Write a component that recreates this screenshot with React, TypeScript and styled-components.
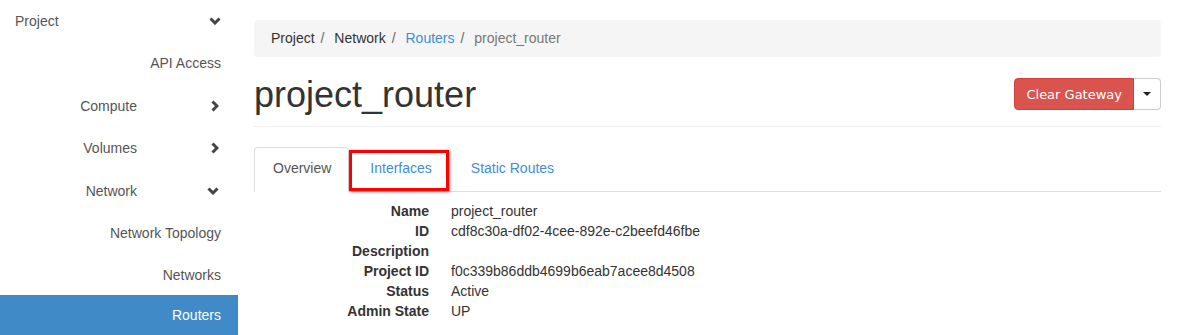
import React from "react";
import styled, { createGlobalStyle } from "styled-components";

const Global = createGlobalStyle`
  html, body { margin: 0; padding: 0; background: #fff; }
  body {
    font-family: "Liberation Sans", Helvetica, Arial, sans-serif;
    font-size: 14px;
    color: #333;
    line-height: 20px;
  }
  * { box-sizing: border-box; }
`;

const Page = styled.div`
  display: flex;
  width: 1177px;
  height: 335px;
  overflow: hidden;
`;

const Sidebar = styled.nav`
  width: 238px;
  flex: none;
  display: flex;
  flex-direction: column;
`;

const NavRow = styled.div<{ $h: number; $active?: boolean; $spread?: boolean }>`
  height: ${(p) => p.$h}px;
  display: flex;
  align-items: center;
  justify-content: ${(p) => (p.$spread ? "space-between" : "flex-end")};
  padding: 0 17px 0 15px;
  color: ${(p) => (p.$active ? "#fff" : "#555")};
  background: ${(p) => (p.$active ? "#408ac8" : "transparent")};
`;

const ChevronBox = styled.span`
  width: 84px;
  display: flex;
  justify-content: flex-end;
  padding-right: 2px;
`;

const Main = styled.main`
  flex: 1;
  min-width: 0;
  padding: 20px 16px 0 16px;
`;

const Breadcrumb = styled.ol`
  list-style: none;
  margin: 0;
  height: 37px;
  padding: 0 17px 2px;
  background: #f5f5f5;
  border-radius: 4px;
  display: flex;
  align-items: center;
`;

const Crumb = styled.li<{ $kind?: "link" | "current" }>`
  color: ${(p) => (p.$kind === "link" ? "#3f8fd2" : p.$kind === "current" ? "#777" : "#333")};
`;

const Sep = styled.span`
  color: #666;
  padding: 0 6px 0 6px;
`;

const Header = styled.div`
  margin-top: 18px;
  display: flex;
  align-items: center;
  justify-content: space-between;
  padding-bottom: 11px;
  border-bottom: 1px solid #eee;
`;

const Title = styled.h1`
  margin: 0;
  font-size: 36px;
  line-height: 40px;
  font-weight: 400;
  color: #333;
`;

const BtnGroup = styled.div`
  display: flex;
  height: 32px;
  margin-bottom: 2px;
`;

const DangerBtn = styled.button`
  font-family: "DejaVu Sans", sans-serif;
  font-size: 13px;
  height: 32px;
  padding: 0 11px;
  border: 1px solid #d43f3a;
  background: #d9534f;
  color: #fff;
  border-radius: 4px 0 0 4px;
`;

const CaretBtn = styled.button`
  width: 27px;
  height: 32px;
  border: 1px solid #ccc;
  border-left: none;
  background: #fff;
  border-radius: 0 4px 4px 0;
  display: flex;
  align-items: center;
  justify-content: center;
  padding: 0;
`;

const Caret = styled.span`
  width: 0;
  height: 0;
  border-left: 4px solid transparent;
  border-right: 4px solid transparent;
  border-top: 4px solid #222;
`;

const Tabs = styled.ul`
  list-style: none;
  margin: 20px 0 0;
  padding: 0;
  display: flex;
  border-bottom: 1px solid #ddd;
`;

const Tab = styled.li<{ $active?: boolean }>`
  position: relative;
  margin-right: 2px;
  margin-bottom: ${(p) => (p.$active ? "-1px" : "0")};
  padding: 10px 17px ${(p) => (p.$active ? "13px" : "12px")} 18px;
  border: 1px solid ${(p) => (p.$active ? "#ddd" : "transparent")};
  border-bottom: ${(p) => (p.$active ? "1px solid #fff" : "none")};
  border-radius: 4px 4px 0 0;
  background: ${(p) => (p.$active ? "#fff" : "transparent")};
  color: ${(p) => (p.$active ? "#555" : "#3f8fd2")};
`;

const Highlight = styled.span`
  position: absolute;
  top: 2px;
  left: -3px;
  right: 0;
  bottom: 0;
  border: 3px solid #f00;
  box-shadow: 1px 1px 3px rgba(0, 0, 0, 0.45);
  pointer-events: none;
`;

const Details = styled.dl`
  margin: 9px 0 0;
  display: grid;
  grid-template-columns: 175px 1fr;
  column-gap: 22px;
  line-height: 20px;
`;

const Term = styled.dt`
  font-weight: 700;
  text-align: right;
  color: #333;
`;

const Desc = styled.dd`
  margin: 0;
  color: #333;
  min-height: 20px;
`;

const ChevronDown = () => (
  <svg width="12" height="8" viewBox="0 0 12 8">
    <polyline points="1.5,1.5 6,6 10.5,1.5" fill="none" stroke="#444" strokeWidth="3" />
  </svg>
);

const ChevronRight = () => (
  <svg width="8" height="12" viewBox="0 0 8 12">
    <polyline points="1.5,1.5 6,6 1.5,10.5" fill="none" stroke="#444" strokeWidth="3" />
  </svg>
);

const details: [string, string][] = [
  ["Name", "project_router"],
  ["ID", "cdf8c30a-df02-4cee-892e-c2beefd46fbe"],
  ["Description", ""],
  ["Project ID", "f0c339b86ddb4699b6eab7acee8d4508"],
  ["Status", "Active"],
  ["Admin State", "UP"],
];

export default function App() {
  return (
    <>
      <Global />
      <Page>
        <Sidebar>
          <NavRow $h={42} $spread>
            <span>Project</span>
            <ChevronDown />
          </NavRow>
          <NavRow $h={43}>API Access</NavRow>
          <NavRow $h={42}>
            <span>Compute</span>
            <ChevronBox><ChevronRight /></ChevronBox>
          </NavRow>
          <NavRow $h={43}>
            <span>Volumes</span>
            <ChevronBox><ChevronRight /></ChevronBox>
          </NavRow>
          <NavRow $h={43}>
            <span>Network</span>
            <ChevronBox><ChevronDown /></ChevronBox>
          </NavRow>
          <NavRow $h={42}>Network Topology</NavRow>
          <NavRow $h={41}>Networks</NavRow>
          <NavRow $h={40} $active>Routers</NavRow>
        </Sidebar>
        <Main>
          <Breadcrumb>
            <Crumb>Project</Crumb>
            <Sep>/&nbsp;</Sep>
            <Crumb>Network</Crumb>
            <Sep>/&nbsp;</Sep>
            <Crumb $kind="link">Routers</Crumb>
            <Sep>/&nbsp;</Sep>
            <Crumb $kind="current">project_router</Crumb>
          </Breadcrumb>
          <Header>
            <Title>project_router</Title>
            <BtnGroup>
              <DangerBtn>Clear Gateway</DangerBtn>
              <CaretBtn><Caret /></CaretBtn>
            </BtnGroup>
          </Header>
          <Tabs>
            <Tab $active>Overview</Tab>
            <Tab>
              Interfaces
              <Highlight />
            </Tab>
            <Tab>Static Routes</Tab>
          </Tabs>
          <Details>
            {details.map(([k, v]) => (
              <React.Fragment key={k}>
                <Term>{k}</Term>
                <Desc>{v}</Desc>
              </React.Fragment>
            ))}
          </Details>
        </Main>
      </Page>
    </>
  );
}
